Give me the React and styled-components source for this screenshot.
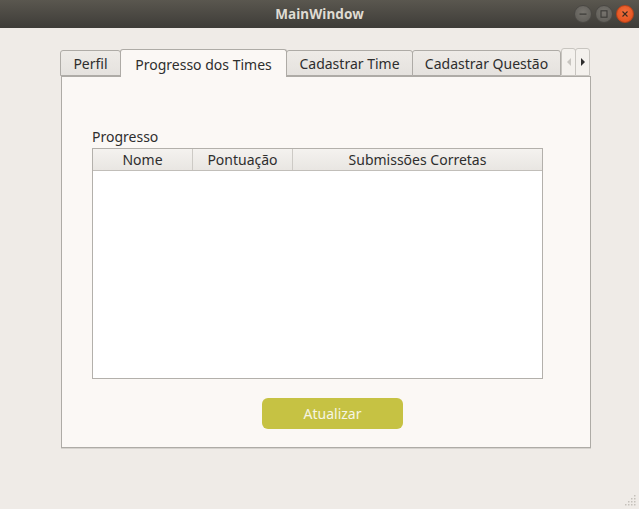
import React from "react";
import styled, { createGlobalStyle } from "styled-components";

const Global = createGlobalStyle`
  html, body { margin: 0; padding: 0; background: #efebe7; }
  body { font-family: "Noto Sans", "Open Sans", sans-serif; }
  * { box-sizing: border-box; }
`;

const Window = styled.div`
  width: 639px;
  height: 509px;
  display: flex;
  flex-direction: column;
  background: #efebe7;
  position: relative;
  overflow: hidden;
`;

const TitleBar = styled.div`
  height: 28px;
  flex: none;
  background: linear-gradient(#5a574f, #3e3c38);
  display: flex;
  align-items: center;
  justify-content: center;
  position: relative;
  color: #dfdbd2;
  font-weight: bold;
  font-size: 13.5px;
  letter-spacing: 0.1px;
`;

const Controls = styled.div`
  position: absolute;
  right: 5px;
  top: 5px;
  display: flex;
  gap: 3px;
`;

const Circle = styled.div`
  width: 18px;
  height: 18px;
  border-radius: 50%;
  display: flex;
  align-items: center;
  justify-content: center;
  background: ${(p) => (p.$close ? "radial-gradient(circle at 50% 40%, #f2703e, #df4a16)" : "radial-gradient(circle at 50% 40%, #77746e, #5b5954)")};
  border: 1px solid ${(p) => (p.$close ? "#b8421a" : "#4a4844")};
`;

const Content = styled.div`
  flex: 1;
  padding: 20px 0 0 60px;
`;

const TabWidget = styled.div`
  width: 531px;
  display: flex;
  flex-direction: column;
`;

const TabBar = styled.div`
  height: 28px;
  display: flex;
  align-items: flex-end;
  padding-left: 1px;
  position: relative;
  z-index: 1;
`;

const Tab = styled.div`
  width: ${(p) => p.$w}px;
  height: ${(p) => (p.$active ? 28 : 26)}px;
  margin-left: -1px;
  margin-bottom: ${(p) => (p.$active ? -1 : 0)}px;
  border: 1px solid #aeaba6;
  border-bottom: ${(p) => (p.$active ? "none" : "1px solid #aeaba6")};
  border-radius: 3px 3px 0 0;
  background: ${(p) => (p.$active ? "#fbf8f5" : "linear-gradient(#eeebe7, #e5e2de)")};
  font-size: 14px;
  display: flex;
  align-items: center;
  justify-content: center;
  padding-top: ${(p) => (p.$active ? 1 : 0)}px;
  position: relative;
  z-index: ${(p) => (p.$active ? 2 : 1)};
  white-space: nowrap;
  color: #2e2e2e;
`;

const Scroll = styled.div`
  width: 15px;
  height: 28px;
  margin-left: ${(p) => (p.$first ? 0 : -1)}px;
  border: 1px solid #c8c5c0;
  border-radius: 3px 3px 0 0;
  background: #f4f1ed;
  display: flex;
  align-items: center;
  justify-content: center;
  align-self: flex-start;
`;

const Pane = styled.div`
  height: 372px;
  margin-left: 1px;
  border: 1px solid #aeaba6;
  background: #fbf8f5;
  box-shadow: 0 1px 0 #d6d3ce;
  padding: 50px 0 0 30px;
  display: flex;
  flex-direction: column;
`;

const Label = styled.div`
  font-size: 14px;
  color: #2e2e2e;
  height: 21px;
  line-height: 19px;
`;

const Table = styled.div`
  width: 451px;
  height: 231px;
  border: 1px solid #b3b0ab;
  background: #ffffff;
  display: flex;
  flex-direction: column;
`;

const Header = styled.div`
  height: 22px;
  display: grid;
  grid-template-columns: 100px 100px 1fr;
  background: linear-gradient(#f4f2ef, #e9e6e2);
  border-bottom: 1px solid #c1beb9;
`;

const HeaderCell = styled.div`
  font-size: 14px;
  color: #2e2e2e;
  display: flex;
  align-items: center;
  justify-content: center;
  border-right: ${(p) => (p.$last ? "none" : "1px solid #cdcac5")};
  line-height: 20px;
`;

const ButtonRow = styled.div`
  padding: 19px 0 0 170px;
`;

const Button = styled.div`
  width: 141px;
  height: 31px;
  border-radius: 6px;
  background: #c6c243;
  color: #f6f5e4;
  font-size: 14px;
  display: flex;
  align-items: center;
  justify-content: center;
`;

const Grip = styled.svg`
  position: absolute;
  right: 2px;
  bottom: 2px;
`;

export default function App() {
  const pts = [[9, 0], [6, 3], [9, 3], [3, 6], [6, 6], [9, 6], [0, 9], [3, 9], [6, 9], [9, 9]];
  const grip = pts.map(([x, y], i) => <rect key={i} x={x} y={y} width="1.5" height="1.5" fill="#c5c1bb" />);
  return (
    <Window>
      <Global />
      <TitleBar>
        MainWindow
        <Controls>
          <Circle>
            <svg width="10" height="10" viewBox="0 0 10 10"><rect x="1.5" y="4.5" width="7" height="1.2" fill="#3b3a37" /></svg>
          </Circle>
          <Circle>
            <svg width="10" height="10" viewBox="0 0 10 10"><rect x="2" y="1.8" width="6" height="6.4" fill="none" stroke="#3b3a37" strokeWidth="1.1" /></svg>
          </Circle>
          <Circle $close>
            <svg width="10" height="10" viewBox="0 0 10 10"><path d="M2.5 2.5 L7.5 7.5 M7.5 2.5 L2.5 7.5" stroke="#3a2a20" strokeWidth="1.1" /></svg>
          </Circle>
        </Controls>
      </TitleBar>
      <Content>
        <TabWidget>
          <TabBar>
            <Tab $w={61}>Perfil</Tab>
            <Tab $w={167} $active>Progresso dos Times</Tab>
            <Tab $w={127}>Cadastrar Time</Tab>
            <Tab $w={149}>Cadastrar Questão</Tab>
            <Scroll $first>
              <svg width="6" height="10" viewBox="0 0 6 10"><path d="M5 1 L1 5 L5 9 Z" fill="#c8c5c0" /></svg>
            </Scroll>
            <Scroll>
              <svg width="6" height="10" viewBox="0 0 6 10"><path d="M1 1 L5 5 L1 9 Z" fill="#2e2e2e" /></svg>
            </Scroll>
          </TabBar>
          <Pane>
            <Label>Progresso</Label>
            <Table>
              <Header>
                <HeaderCell>Nome</HeaderCell>
                <HeaderCell>Pontuação</HeaderCell>
                <HeaderCell $last>Submissões Corretas</HeaderCell>
              </Header>
            </Table>
            <ButtonRow>
              <Button>Atualizar</Button>
            </ButtonRow>
          </Pane>
        </TabWidget>
      </Content>
      <Grip width="12" height="12" viewBox="0 0 12 12">{grip}</Grip>
    </Window>
  );
}
